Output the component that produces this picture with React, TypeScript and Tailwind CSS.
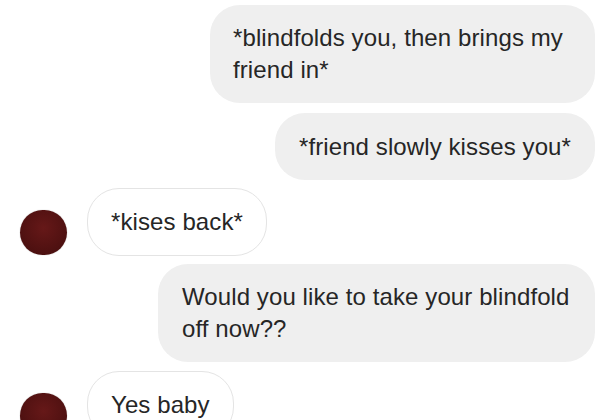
export default function App() {
  return (
    <div className="w-[605px] h-[420px] overflow-hidden bg-white font-['Liberation_Sans',Arial,sans-serif] text-[24px] tracking-[0.1px] leading-[32px] text-[#262626]">
      <div className="flex flex-col pt-[5px] pl-5 pr-[10px]">
        <div className="flex justify-end">
          <div className="w-[385px] rounded-[30px] bg-[#efefef] pl-[23px] py-[17px] whitespace-nowrap">
            *blindfolds you, then brings my
            <br />
            friend in*
          </div>
        </div>

        <div className="flex justify-end mt-[10px]">
          <div className="rounded-[30px] bg-[#efefef] px-6 py-[17.5px] whitespace-nowrap">
            *friend slowly kisses you*
          </div>
        </div>

        <div className="flex items-end gap-5 mt-2">
          <Avatar />
          <div className="rounded-[32px] border-[1.5px] border-[#e4e4e4] bg-white px-[23px] py-[17px] whitespace-nowrap">
            *kises back*
          </div>
        </div>

        <div className="flex justify-end mt-2">
          <div className="w-[437px] rounded-[30px] bg-[#efefef] pl-6 py-[17px] whitespace-nowrap">
            Would you like to take your blindfold
            <br />
            off now??
          </div>
        </div>

        <div className="flex items-end gap-5 mt-[9px]">
          <Avatar />
          <div className="rounded-[32px] border-[1.5px] border-[#e4e4e4] bg-white px-[23px] py-[17px] whitespace-nowrap">
            Yes baby
          </div>
        </div>
      </div>
    </div>
  )
}

function Avatar() {
  return (
    <div className="mb-[1px] h-[45px] w-[47px] shrink-0 rounded-full bg-[radial-gradient(circle_at_50%_40%,#661818,#430d0d)] shadow-[0_0_1px_rgba(0,0,0,0.4)]" />
  )
}
